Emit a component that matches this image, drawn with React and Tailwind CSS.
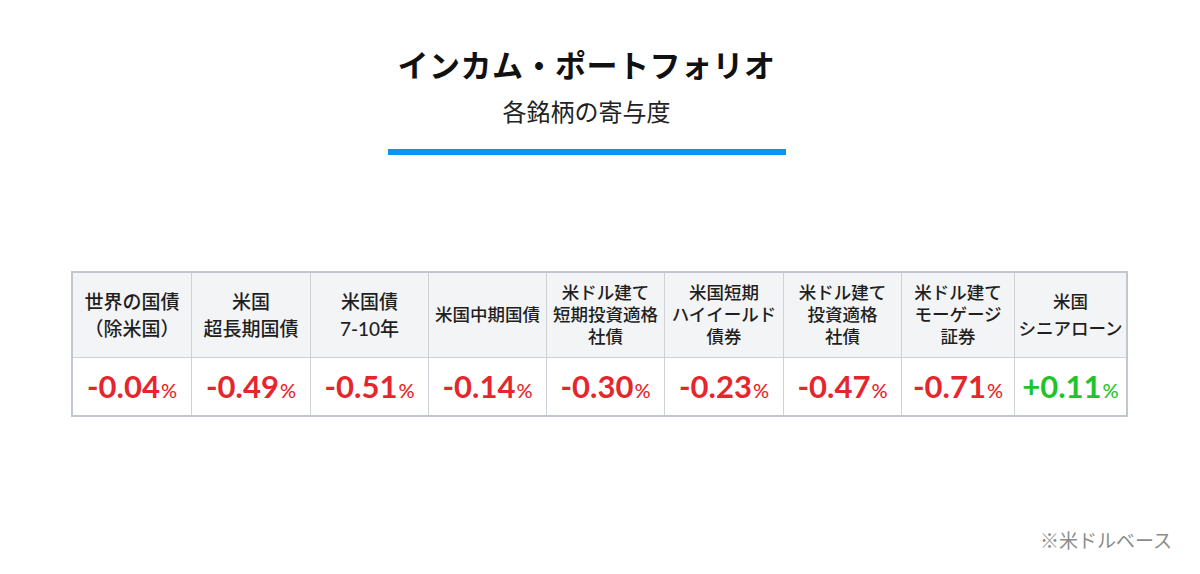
const columns = [
  { w: 'w-[119px]', size: 'text-[19px] leading-[27px]', label: ['世界の国債', '（除米国）'], value: '-0.04' },
  { w: 'w-[119px]', size: 'text-[19px] leading-[27px]', label: ['米国', '超長期国債'], value: '-0.49' },
  { w: 'w-[118px]', size: 'text-[19px] leading-[27px]', label: ['米国債', '7-10年'], value: '-0.51' },
  { w: 'w-[118px]', size: 'text-[17.5px] leading-[22px]', label: ['米国中期国債'], value: '-0.14' },
  { w: 'w-[118px]', size: 'text-[17.5px] leading-[22px]', label: ['米ドル建て', '短期投資適格', '社債'], value: '-0.30' },
  { w: 'w-[119px]', size: 'text-[17.5px] leading-[22px]', label: ['米国短期', 'ハイイールド', '債券'], value: '-0.23' },
  { w: 'w-[118px]', size: 'text-[17.5px] leading-[22px]', label: ['米ドル建て', '投資適格', '社債'], value: '-0.47' },
  { w: 'w-[113px]', size: 'text-[17.5px] leading-[22px]', label: ['米ドル建て', 'モーゲージ', '証券'], value: '-0.71' },
  { w: 'w-[111px]', size: 'text-[17.5px] leading-[27px]', label: ['米国', 'シニアローン'], value: '+0.11', last: true },
];

export default function App() {
  return (
    <div className="w-[1200px] h-[574px] bg-white flex flex-col text-[#1a1a1a] font-['Lato','Noto_Sans_CJK_JP',sans-serif]">
      <div className="flex flex-col items-center pr-[27px] pt-[47px]">
        <h1 className="text-[31px] leading-[37px] font-bold text-[#111] tracking-[0.5px]">
          インカム・ポートフォリオ
        </h1>
        <p className="mt-[13px] text-[24px] leading-[30px] text-[#222]">各銘柄の寄与度</p>
        <div className="mt-[22px] w-[398px] h-[6px] bg-[#0a95f5]" />
      </div>

      <div className="mt-[116px] ml-[71px] w-fit border-2 border-[#c2c6ce] flex">
        {columns.map((col, idx) => (
          <div key={idx} className={`${col.w} flex flex-col ${col.last ? '' : 'border-r border-[#cdd0d6]'}`}>
            <div
              className={`h-[85px] bg-[#f3f4f6] border-b border-[#cdd0d6] flex flex-col items-center justify-center text-center whitespace-nowrap font-medium text-[#1f1f1f] ${col.size}`}
            >
              {col.label.map((line, i) => (
                <span key={i}>{line}</span>
              ))}
            </div>
            <div
              className={`h-[57px] flex items-baseline justify-center pt-[11px] font-bold ${
                col.value.startsWith('+') ? 'text-[#1ec42a]' : 'text-[#e5262c]'
              }`}
            >
              <span className="text-[31px] leading-[34px]">{col.value}</span>
              <span className="text-[20px] leading-[34px] font-medium ml-[1px]">%</span>
            </div>
          </div>
        ))}
      </div>

      <div className="mt-[111px] pr-[28px] text-right text-[19px] leading-[25px] text-[#8c8c8c]">
        ※米ドルベース
      </div>
    </div>
  );
}
